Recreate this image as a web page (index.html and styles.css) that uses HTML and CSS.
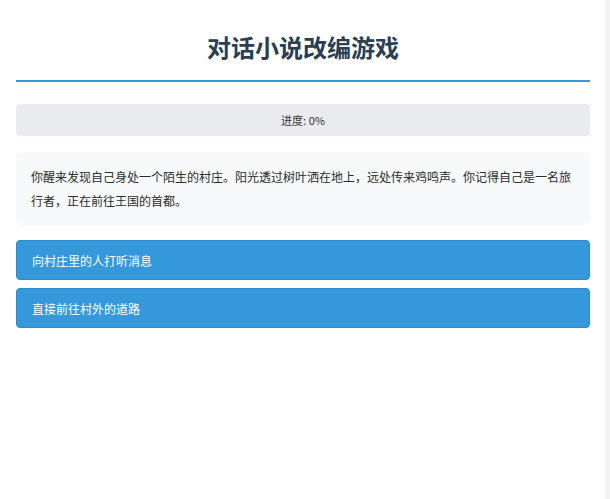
FILE: index.html
```html
<!DOCTYPE html>
<html lang="zh">
<head>
<meta charset="utf-8">
<title>对话小说改编游戏</title>
<link rel="stylesheet" href="styles.css">
</head>
<body>
<div class="container">
  <h1 class="title">对话小说改编游戏</h1>
  <div class="progress">进度: 0%</div>
  <div class="story">你醒来发现自己身处一个陌生的村庄。阳光透过树叶洒在地上，远处传来鸡鸣声。你记得自己是一名旅行者，正在前往王国的首都。</div>
  <div class="choices">
    <button class="choice">向村庄里的人打听消息</button>
    <button class="choice">直接前往村外的道路</button>
  </div>
</div>
</body>
</html>
```

FILE: styles.css
```css
html, body {
  margin: 0;
  padding: 0;
  height: 100%;
}
body {
  background: #f4f4f5;
  font-family: "Noto Sans CJK SC", "Noto Sans", sans-serif;
  color: #333;
}
.container {
  width: 605px;
  min-height: 100%;
  box-sizing: border-box;
  background: #ffffff;
  padding: 0 15px 0 16px;
}
.title {
  margin: 0;
  padding-top: 32px;
  padding-bottom: 19px;
  font-size: 24px;
  line-height: 29px;
  font-weight: 700;
  text-align: center;
  color: #2c3e50;
  border-bottom: 2px solid #3498db;
}
.progress {
  margin-top: 22px;
  height: 32px;
  line-height: 32px;
  background: #eaebee;
  border-radius: 4px;
  text-align: center;
  font-size: 11px;
  color: #333;
}
.story {
  margin-top: 16px;
  padding: 13px 12px 12px 15px;
  background: #f8f9fa;
  border-radius: 5px;
  font-size: 12px;
  line-height: 24px;
  color: #2b2b2b;
}
.choices {
  margin-top: 15px;
  display: flex;
  flex-direction: column;
  gap: 8px;
}
.choice {
  display: block;
  width: 100%;
  height: 40px;
  box-sizing: border-box;
  padding: 0 15px;
  text-align: left;
  background: #3498db;
  border: 1px solid #2b8ad0;
  border-radius: 4px;
  color: #ffffff;
  font-family: "Noto Sans CJK SC", "Noto Sans", sans-serif;
  font-size: 12px;
  font-weight: 400;
  cursor: pointer;
}
```
